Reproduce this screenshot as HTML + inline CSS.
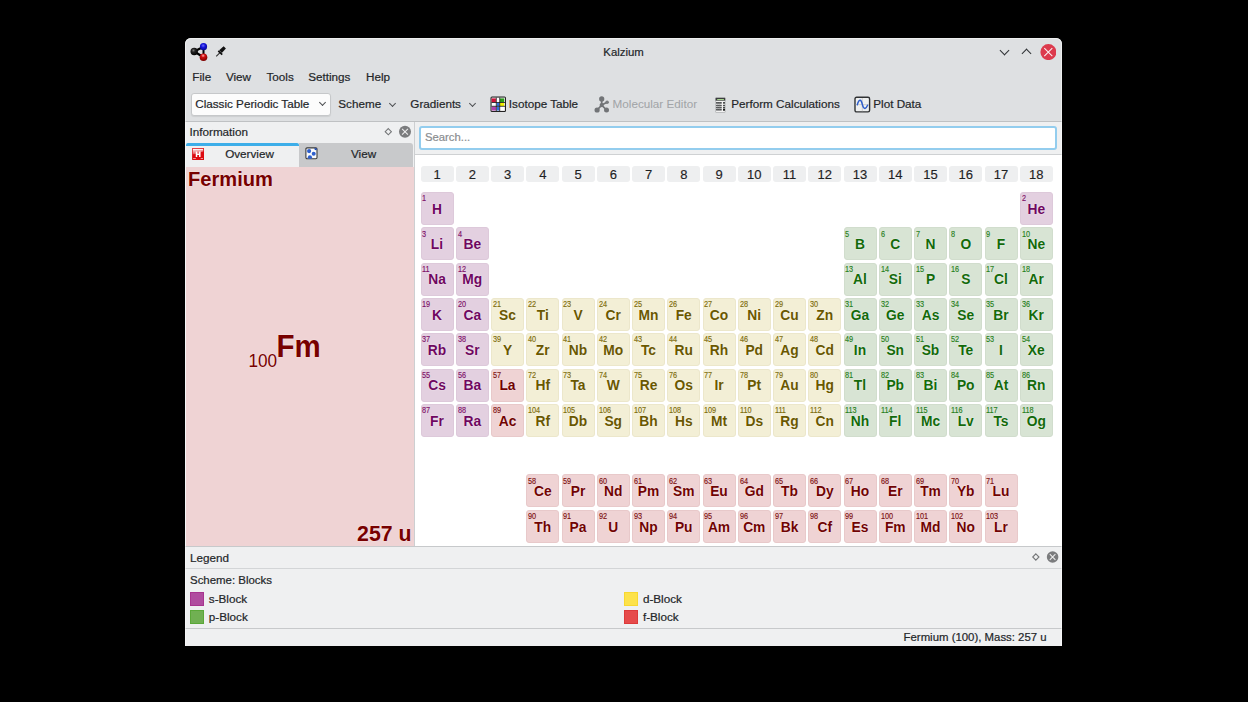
<!DOCTYPE html>
<html><head><meta charset="utf-8">
<style>
*{margin:0;padding:0;box-sizing:border-box}
html,body{width:1248px;height:702px;background:#000;overflow:hidden;font-family:"Liberation Sans",sans-serif;color:#232629}
.a{position:absolute}
.t{position:absolute;white-space:nowrap;line-height:1}
#win{position:absolute;left:185px;top:38px;width:877px;height:608px;background:#eff0f1;border-radius:6px 6px 0 0;overflow:hidden}
#hdr{position:absolute;left:0;top:0;width:877px;height:84px;background:#dee0e2;border-bottom:1px solid #bfc1c3}
.ui{font-size:11.7px;-webkit-text-stroke:0.2px currentColor}
.combo{position:absolute;left:5.8px;top:55.3px;width:140.3px;height:22.3px;background:#fcfcfc;border:1px solid #c6c8ca;border-radius:3px;box-shadow:0 1px 1px rgba(0,0,0,.08)}
.chev{position:absolute;width:6px;height:6px;border-right:1.1px solid #4d4f52;border-bottom:1.1px solid #4d4f52;transform:rotate(45deg)}
#info{position:absolute;left:1px;top:84px;width:228px;height:424px}
#pink{position:absolute;left:1px;top:128.6px;width:228px;height:379.4px;background:#efd3d4}
.red{color:#780000;text-shadow:0 0 2px rgba(255,255,255,.6)}
#content{position:absolute;left:230px;top:116px;width:647px;height:392px;background:#fff}
.c{position:absolute;width:33.2px;height:33px;border-radius:3px}
.c i{position:absolute;left:0.8px;top:1.3px;font-style:normal;font-size:8.3px;line-height:1;letter-spacing:-0.1px;transform:scaleX(.88);transform-origin:0 0;-webkit-text-stroke:0.15px currentColor}
.c b{position:absolute;left:-1px;width:33px;top:9.9px;text-align:center;font-size:13.8px;line-height:1;font-weight:bold;text-shadow:0 0 1.5px rgba(255,255,255,.9)}
.s{background:#e3d0e0;border:1px solid #ddc9da}
.s i{color:#7e1068}.s b{color:#6f0760}
.p{background:#d8e4d4;border:1px solid #d1ddcd}
.p i{color:#27801c}.p b{color:#136a0a}
.d{background:#f3efd6;border:1px solid #ece7cb}
.d i{color:#7e6d0c}.d b{color:#6a5800}
.f{background:#efd3d4;border:1px solid #e8c9ca}
.f i{color:#7e1212}.f b{color:#710303}
.g{position:absolute;top:166px;width:33.2px;height:16px;background:#eeeff0;border-radius:3px;text-align:center;font-size:13px;line-height:17.6px;color:#1f2224;-webkit-text-stroke:0.15px #1f2224}
.sw{position:absolute;width:14.2px;height:14px;border:1px solid rgba(0,0,0,.1)}
</style></head><body>
<div id="win">
  <div id="hdr">
    <!-- app icon -->
    <svg class="a" style="left:0;top:0" width="60" height="30" viewBox="0 0 60 30">
      <defs>
        <radialGradient id="gk" cx="0.4" cy="0.35" r="0.7"><stop offset="0" stop-color="#777"/><stop offset="0.35" stop-color="#222"/><stop offset="1" stop-color="#000"/></radialGradient>
        <radialGradient id="gb" cx="0.45" cy="0.35" r="0.7"><stop offset="0" stop-color="#6a6aff"/><stop offset="0.4" stop-color="#1414d8"/><stop offset="1" stop-color="#05058a"/></radialGradient>
        <radialGradient id="gr" cx="0.45" cy="0.3" r="0.7"><stop offset="0" stop-color="#ffb0b0"/><stop offset="0.35" stop-color="#d01010"/><stop offset="1" stop-color="#7a0000"/></radialGradient>
      </defs>
      <line x1="9.2" y1="13.5" x2="18.5" y2="8.7" stroke="#000" stroke-width="2.2"/>
      <line x1="9.2" y1="13.5" x2="18.5" y2="19.2" stroke="#000" stroke-width="2.2"/>
      <line x1="18.5" y1="8.7" x2="18.5" y2="19.2" stroke="#000" stroke-width="2"/>
      <circle cx="9.2" cy="13.5" r="3.7" fill="url(#gk)"/>
      <circle cx="18.5" cy="8.7" r="3.6" fill="url(#gb)"/>
      <circle cx="18.5" cy="19.2" r="3.8" fill="url(#gr)"/>
      <path d="M31.2 18.4 L35.3 14.3" stroke="#333" stroke-width="1.1"/>
      <path d="M34.2 12.3 L38.6 8.2 L40.9 10.6 L36.8 15 Z" fill="#111"/>
      <path d="M33.3 12.8 L37.2 16.7" stroke="#111" stroke-width="1.7"/>
    </svg>
    <div class="t ui" style="left:418.3px;top:9px;font-size:11.4px">Kalzium</div>
    <!-- window controls -->
    <div class="chev" style="left:815.5px;top:9.2px;width:7px;height:7px;border-color:#2e3134"></div>
    <div class="chev" style="left:837.9px;top:12.1px;width:7px;height:7px;border-color:#2e3134;transform:rotate(225deg)"></div>
    <svg class="a" style="left:855px;top:6px" width="16" height="16" viewBox="0 0 16 16">
      <circle cx="8.4" cy="8.1" r="8" fill="#dc3a4d"/>
      <path d="M4.3 4.1 L12.3 12.1 M12.3 4.1 L4.3 12.1" stroke="#fff" stroke-width="1.05" opacity=".92"/>
    </svg>
    <!-- menu -->
    <div class="t ui" style="left:7.3px;top:32.8px">File</div>
    <div class="t ui" style="left:40.9px;top:32.8px">View</div>
    <div class="t ui" style="left:81.5px;top:32.8px">Tools</div>
    <div class="t ui" style="left:123.2px;top:32.8px">Settings</div>
    <div class="t ui" style="left:181px;top:32.8px">Help</div>
    <!-- toolbar -->
    <div class="combo"></div>
    <div class="t ui" style="left:10.2px;top:60.1px">Classic Periodic Table</div>
    <div class="chev" style="left:134.5px;top:61.5px;width:5px;height:5px"></div>
    <div class="t ui" style="left:153.3px;top:60.3px">Scheme</div>
    <div class="chev" style="left:205.2px;top:62.5px;width:5px;height:5px"></div>
    <div class="t ui" style="left:225.3px;top:60.3px">Gradients</div>
    <div class="chev" style="left:284.8px;top:62.5px;width:5px;height:5px"></div>
    <!-- isotope icon -->
    <svg class="a" style="left:305px;top:58.4px" width="17" height="17" viewBox="0 0 17 17">
      <rect x="0.5" y="0.5" width="15.5" height="15.5" rx="1.5" fill="#222"/>
      <rect x="1.6" y="1.6" width="13.3" height="13.3" fill="#fff"/>
      <rect x="1.7" y="2.4" width="4.2" height="3.9" fill="#d0103a"/>
      <rect x="10" y="2.4" width="4.2" height="3.9" fill="#2a9a1a"/>
      <rect x="6.8" y="6.8" width="2.6" height="3.2" fill="#2f6fe0"/>
      <rect x="10" y="6.8" width="4.2" height="3.2" fill="#f2f000"/>
      <rect x="1.7" y="10.6" width="4.2" height="3.9" fill="#b040b0"/>
      <rect x="6.8" y="10.6" width="2.6" height="3.9" fill="#2f6fe0"/>
      <path d="M1.6 6.5 H15 M1.6 10.3 H15 M6.3 1.6 V15 M9.7 1.6 V15" stroke="#111" stroke-width="0.8"/>
    </svg>
    <div class="t ui" style="left:323.8px;top:60.3px">Isotope Table</div>
    <!-- molecular editor icon -->
    <svg class="a" style="left:409px;top:58px" width="17" height="17" viewBox="0 0 17 17">
      <path d="M7.7 3 L7.7 9.1 M7.7 9.1 L3.1 14 M7.7 9.1 L12.5 14 M7.7 9.1 L13.1 6.3" stroke="#727477" stroke-width="1.7" fill="none"/>
      <circle cx="7.7" cy="2.9" r="2.6" fill="#727477"/>
      <circle cx="13.1" cy="6.3" r="1.8" fill="#7a7c7f"/>
      <circle cx="7.7" cy="9.1" r="2.1" fill="#727477"/>
      <circle cx="3.1" cy="14" r="2.6" fill="#727477"/>
      <circle cx="12.5" cy="14" r="2.5" fill="#727477"/>
    </svg>
    <div class="t ui" style="left:427.6px;top:60.3px;color:#a2a5a8;-webkit-text-stroke:0.05px #a2a5a8">Molecular Editor</div>
    <!-- calculator icon -->
    <svg class="a" style="left:530px;top:59px" width="12" height="17" viewBox="0 0 12 17">
      <rect x="0.6" y="0.8" width="9.6" height="14.7" rx="0.6" fill="#f2f2f2" stroke="#a0a2a4" stroke-width="0.6"/>
      <rect x="0.6" y="0.8" width="9.6" height="2.9" fill="#3c3e40"/>
      <rect x="2.2" y="2" width="6.7" height="1.1" fill="#a6d48e"/>
      <g fill="#4a4c4e">
        <rect x="1.1" y="5" width="5.6" height="1.7"/><rect x="8" y="5" width="2" height="1.7"/>
        <rect x="1.1" y="7.8" width="5.6" height="1.4"/><rect x="8" y="7.8" width="2" height="1.4"/>
        <rect x="1.1" y="9.9" width="5.6" height="1.5"/><rect x="8" y="9.9" width="2" height="1.5"/>
        <rect x="1.1" y="12" width="5.6" height="1.5"/><rect x="8" y="11.8" width="2" height="1.9" fill="#1a1a1a"/>
      </g>
      <path d="M2.9 5 V13.5 M4.8 5 V13.5" stroke="#8a8c8e" stroke-width="0.5"/>
    </svg>
    <div class="t ui" style="left:546.3px;top:60.3px">Perform Calculations</div>
    <!-- plot icon -->
    <svg class="a" style="left:669px;top:58px" width="17" height="18" viewBox="0 0 17 18">
      <rect x="1" y="1.3" width="14.6" height="14.6" rx="1.6" fill="#eef0f0" stroke="#303234" stroke-width="1.4"/>
      <path d="M8.3 2 V15.3 M1.7 8.6 H15" stroke="#b8babc" stroke-width="0.6"/>
      <path d="M3.3 8.8 C4.2 5.5 5.2 4.2 6.2 4.3 C7.4 4.4 7.9 6.5 8.4 8.6 C9 11 9.8 12.5 11 12.4 C12.2 12.3 12.9 10.8 13.6 9.2" stroke="#2f5fcc" stroke-width="1.5" fill="none" stroke-linecap="round"/>
    </svg>
    <div class="t ui" style="left:688.3px;top:60.3px">Plot Data</div>
  </div>

  <!-- info dock -->
  <div class="t ui" style="left:4.5px;top:88px">Information</div>
  <svg class="a" style="left:196px;top:87px" width="34" height="14" viewBox="0 0 34 14">
    <path d="M7.3 3.6 L10.4 6.7 L7.3 9.8 L4.2 6.7 Z" fill="none" stroke="#76787a" stroke-width="1.1"/>
    <circle cx="24" cy="6.7" r="6" fill="#7b7c7e"/>
    <path d="M21.1 3.8 L26.9 9.6 M26.9 3.8 L21.1 9.6" stroke="#eeeeee" stroke-width="1.05"/>
  </svg>
  <div class="a" style="left:114px;top:105px;width:114px;height:23.6px;background:#c8c9cb;border-radius:0 3px 0 0"></div>
  <div class="a" style="left:1px;top:105.2px;width:113px;height:2.5px;background:#3daee9;border-radius:2px 2px 0 0"></div>
  <svg class="a" style="left:7px;top:110px" width="13" height="13" viewBox="0 0 13 13">
    <defs><linearGradient id="gl" x1="0" y1="0" x2="0.3" y2="1"><stop offset="0" stop-color="#fff" stop-opacity=".95"/><stop offset="1" stop-color="#fff" stop-opacity=".25"/></linearGradient></defs>
    <rect x="0.1" y="0" width="11.9" height="12.1" rx="0.5" fill="#dc0a10"/>
    <path d="M0.8 0.8 H11.3 V3.5 C8.5 3.8 5 6.5 0.8 6.3 Z" fill="url(#gl)"/>
    <path d="M4.5 3.6 V9 M7.8 3.6 V9 M4.5 6.3 H7.8" stroke="#fff" stroke-width="1.5"/>
    <path d="M1 1.5 H11" stroke="#fff" stroke-width="0.9" opacity=".8"/>
    <path d="M1.1 10.5 H3.9 M8.7 10.5 H11" stroke="#fff" stroke-width="0.8" opacity=".7"/>
  </svg>
  <div class="t ui" style="left:40.5px;top:148px"></div>
  <div class="t ui" style="left:40.2px;top:109.9px">Overview</div>
  <svg class="a" style="left:120px;top:109px" width="14" height="14" viewBox="0 0 14 14">
    <defs><clipPath id="cv"><rect x="1.3" y="1.3" width="10.4" height="10.4"/></clipPath></defs>
    <rect x="0.9" y="0.9" width="11.1" height="10.9" rx="1.2" fill="#fbfbfb" stroke="#3a3b3c" stroke-width="1.1"/>
    <g clip-path="url(#cv)" fill="#2f5fcc">
      <circle cx="4.1" cy="4.1" r="2.1"/><circle cx="8.7" cy="6.8" r="2"/><circle cx="4.9" cy="10.3" r="2.1"/><circle cx="11" cy="1.6" r="1.7" fill="#1c48b0"/>
    </g>
  </svg>
  <div class="t ui" style="left:166px;top:109.9px">View</div>
  <div id="pink"></div>
  <div class="t red" style="left:3px;top:131px;font-size:20.1px;font-weight:bold">Fermium</div>
  <div class="t red" style="left:63.5px;top:314.7px;font-size:17.2px;transform:scaleY(1.05);transform-origin:0 85%">100</div>
  <div class="t red" style="left:91.5px;top:293.8px;font-size:29.5px;font-weight:bold;transform:scaleY(1.07);transform-origin:0 85%">Fm</div>
  <div class="t red" style="left:172.1px;top:485.9px;font-size:21.3px;font-weight:bold">257 u</div>
  <div class="a" style="left:229px;top:84px;width:1px;height:424px;background:#cdcfd1"></div>

  <!-- content -->
  <div class="a" style="left:234.3px;top:88px;width:637.8px;height:24px;border:2px solid #93cdee;border-radius:3px;background:#fff"></div>
  <div class="t ui" style="left:240px;top:94.3px;color:#8a8d90;font-size:11.3px">Search...</div>
  <div id="content"></div>
  <div class="a" style="left:230px;top:116px;width:647px;height:1px;background:#cfd1d3"></div>

  <!-- legend -->
  <div class="a" style="left:0;top:508px;width:877px;height:1px;background:#c7c9cb"></div>
  <div class="t ui" style="left:5px;top:513.8px">Legend</div>
  <svg class="a" style="left:842px;top:510px" width="34" height="18" viewBox="0 0 34 18">
    <path d="M8.85 5.9 L11.95 9 L8.85 12.1 L5.75 9 Z" fill="none" stroke="#76787a" stroke-width="1.1"/>
    <circle cx="25.6" cy="9" r="5.8" fill="#7b7c7e"/>
    <path d="M22.8 6.2 L28.4 11.8 M28.4 6.2 L22.8 11.8" stroke="#eeeeee" stroke-width="1.05"/>
  </svg>
  <div class="a" style="left:0;top:530px;width:877px;height:1px;background:#d3d5d7"></div>
  <div class="t ui" style="left:5px;top:536.5px;font-size:11.45px">Scheme: Blocks</div>
  <div class="sw" style="left:5px;top:553.5px;background:#b04c9f;border-color:#a8348f"></div>
  <div class="t ui" style="left:23.8px;top:554.5px">s-Block</div>
  <div class="sw" style="left:5px;top:572px;background:#70b052;border-color:#5aa838"></div>
  <div class="t ui" style="left:23.8px;top:572.8px">p-Block</div>
  <div class="sw" style="left:438.7px;top:553.5px;background:#fde24a;border-color:#f8d830"></div>
  <div class="t ui" style="left:457.9px;top:554.5px">d-Block</div>
  <div class="sw" style="left:438.7px;top:572px;background:#e64b4b;border-color:#dc3a3a"></div>
  <div class="t ui" style="left:457.9px;top:572.8px">f-Block</div>
  <div class="a" style="left:0;top:590px;width:877px;height:1px;background:#c7c9cb"></div>
  <div class="t ui" style="right:15.4px;top:593.5px;font-size:11.4px">Fermium (100), Mass: 257 u</div>
<div class="a" style="left:0;top:0;width:877px;height:608px;border:1px solid rgba(255,255,255,.45);border-bottom:none;border-radius:6px 6px 0 0;z-index:5"></div>
</div>
<div id="tbl" class="a" style="left:0;top:0">
<div class="g" style="left:420.50px">1</div>
<div class="g" style="left:455.75px">2</div>
<div class="g" style="left:491.00px">3</div>
<div class="g" style="left:526.25px">4</div>
<div class="g" style="left:561.50px">5</div>
<div class="g" style="left:596.75px">6</div>
<div class="g" style="left:632.00px">7</div>
<div class="g" style="left:667.25px">8</div>
<div class="g" style="left:702.50px">9</div>
<div class="g" style="left:737.75px">10</div>
<div class="g" style="left:773.00px">11</div>
<div class="g" style="left:808.25px">12</div>
<div class="g" style="left:843.50px">13</div>
<div class="g" style="left:878.75px">14</div>
<div class="g" style="left:914.00px">15</div>
<div class="g" style="left:949.25px">16</div>
<div class="g" style="left:984.50px">17</div>
<div class="g" style="left:1019.75px">18</div>
<div class="c s" style="left:420.50px;top:192.00px"><i>1</i><b>H</b></div>
<div class="c s" style="left:1019.75px;top:192.00px"><i>2</i><b>He</b></div>
<div class="c s" style="left:420.50px;top:227.30px"><i>3</i><b>Li</b></div>
<div class="c s" style="left:455.75px;top:227.30px"><i>4</i><b>Be</b></div>
<div class="c p" style="left:843.50px;top:227.30px"><i>5</i><b>B</b></div>
<div class="c p" style="left:878.75px;top:227.30px"><i>6</i><b>C</b></div>
<div class="c p" style="left:914.00px;top:227.30px"><i>7</i><b>N</b></div>
<div class="c p" style="left:949.25px;top:227.30px"><i>8</i><b>O</b></div>
<div class="c p" style="left:984.50px;top:227.30px"><i>9</i><b>F</b></div>
<div class="c p" style="left:1019.75px;top:227.30px"><i>10</i><b>Ne</b></div>
<div class="c s" style="left:420.50px;top:262.60px"><i>11</i><b>Na</b></div>
<div class="c s" style="left:455.75px;top:262.60px"><i>12</i><b>Mg</b></div>
<div class="c p" style="left:843.50px;top:262.60px"><i>13</i><b>Al</b></div>
<div class="c p" style="left:878.75px;top:262.60px"><i>14</i><b>Si</b></div>
<div class="c p" style="left:914.00px;top:262.60px"><i>15</i><b>P</b></div>
<div class="c p" style="left:949.25px;top:262.60px"><i>16</i><b>S</b></div>
<div class="c p" style="left:984.50px;top:262.60px"><i>17</i><b>Cl</b></div>
<div class="c p" style="left:1019.75px;top:262.60px"><i>18</i><b>Ar</b></div>
<div class="c s" style="left:420.50px;top:297.90px"><i>19</i><b>K</b></div>
<div class="c s" style="left:455.75px;top:297.90px"><i>20</i><b>Ca</b></div>
<div class="c d" style="left:491.00px;top:297.90px"><i>21</i><b>Sc</b></div>
<div class="c d" style="left:526.25px;top:297.90px"><i>22</i><b>Ti</b></div>
<div class="c d" style="left:561.50px;top:297.90px"><i>23</i><b>V</b></div>
<div class="c d" style="left:596.75px;top:297.90px"><i>24</i><b>Cr</b></div>
<div class="c d" style="left:632.00px;top:297.90px"><i>25</i><b>Mn</b></div>
<div class="c d" style="left:667.25px;top:297.90px"><i>26</i><b>Fe</b></div>
<div class="c d" style="left:702.50px;top:297.90px"><i>27</i><b>Co</b></div>
<div class="c d" style="left:737.75px;top:297.90px"><i>28</i><b>Ni</b></div>
<div class="c d" style="left:773.00px;top:297.90px"><i>29</i><b>Cu</b></div>
<div class="c d" style="left:808.25px;top:297.90px"><i>30</i><b>Zn</b></div>
<div class="c p" style="left:843.50px;top:297.90px"><i>31</i><b>Ga</b></div>
<div class="c p" style="left:878.75px;top:297.90px"><i>32</i><b>Ge</b></div>
<div class="c p" style="left:914.00px;top:297.90px"><i>33</i><b>As</b></div>
<div class="c p" style="left:949.25px;top:297.90px"><i>34</i><b>Se</b></div>
<div class="c p" style="left:984.50px;top:297.90px"><i>35</i><b>Br</b></div>
<div class="c p" style="left:1019.75px;top:297.90px"><i>36</i><b>Kr</b></div>
<div class="c s" style="left:420.50px;top:333.20px"><i>37</i><b>Rb</b></div>
<div class="c s" style="left:455.75px;top:333.20px"><i>38</i><b>Sr</b></div>
<div class="c d" style="left:491.00px;top:333.20px"><i>39</i><b>Y</b></div>
<div class="c d" style="left:526.25px;top:333.20px"><i>40</i><b>Zr</b></div>
<div class="c d" style="left:561.50px;top:333.20px"><i>41</i><b>Nb</b></div>
<div class="c d" style="left:596.75px;top:333.20px"><i>42</i><b>Mo</b></div>
<div class="c d" style="left:632.00px;top:333.20px"><i>43</i><b>Tc</b></div>
<div class="c d" style="left:667.25px;top:333.20px"><i>44</i><b>Ru</b></div>
<div class="c d" style="left:702.50px;top:333.20px"><i>45</i><b>Rh</b></div>
<div class="c d" style="left:737.75px;top:333.20px"><i>46</i><b>Pd</b></div>
<div class="c d" style="left:773.00px;top:333.20px"><i>47</i><b>Ag</b></div>
<div class="c d" style="left:808.25px;top:333.20px"><i>48</i><b>Cd</b></div>
<div class="c p" style="left:843.50px;top:333.20px"><i>49</i><b>In</b></div>
<div class="c p" style="left:878.75px;top:333.20px"><i>50</i><b>Sn</b></div>
<div class="c p" style="left:914.00px;top:333.20px"><i>51</i><b>Sb</b></div>
<div class="c p" style="left:949.25px;top:333.20px"><i>52</i><b>Te</b></div>
<div class="c p" style="left:984.50px;top:333.20px"><i>53</i><b>I</b></div>
<div class="c p" style="left:1019.75px;top:333.20px"><i>54</i><b>Xe</b></div>
<div class="c s" style="left:420.50px;top:368.50px"><i>55</i><b>Cs</b></div>
<div class="c s" style="left:455.75px;top:368.50px"><i>56</i><b>Ba</b></div>
<div class="c f" style="left:491.00px;top:368.50px"><i>57</i><b>La</b></div>
<div class="c f" style="left:526.25px;top:474.40px"><i>58</i><b>Ce</b></div>
<div class="c f" style="left:561.50px;top:474.40px"><i>59</i><b>Pr</b></div>
<div class="c f" style="left:596.75px;top:474.40px"><i>60</i><b>Nd</b></div>
<div class="c f" style="left:632.00px;top:474.40px"><i>61</i><b>Pm</b></div>
<div class="c f" style="left:667.25px;top:474.40px"><i>62</i><b>Sm</b></div>
<div class="c f" style="left:702.50px;top:474.40px"><i>63</i><b>Eu</b></div>
<div class="c f" style="left:737.75px;top:474.40px"><i>64</i><b>Gd</b></div>
<div class="c f" style="left:773.00px;top:474.40px"><i>65</i><b>Tb</b></div>
<div class="c f" style="left:808.25px;top:474.40px"><i>66</i><b>Dy</b></div>
<div class="c f" style="left:843.50px;top:474.40px"><i>67</i><b>Ho</b></div>
<div class="c f" style="left:878.75px;top:474.40px"><i>68</i><b>Er</b></div>
<div class="c f" style="left:914.00px;top:474.40px"><i>69</i><b>Tm</b></div>
<div class="c f" style="left:949.25px;top:474.40px"><i>70</i><b>Yb</b></div>
<div class="c f" style="left:984.50px;top:474.40px"><i>71</i><b>Lu</b></div>
<div class="c d" style="left:526.25px;top:368.50px"><i>72</i><b>Hf</b></div>
<div class="c d" style="left:561.50px;top:368.50px"><i>73</i><b>Ta</b></div>
<div class="c d" style="left:596.75px;top:368.50px"><i>74</i><b>W</b></div>
<div class="c d" style="left:632.00px;top:368.50px"><i>75</i><b>Re</b></div>
<div class="c d" style="left:667.25px;top:368.50px"><i>76</i><b>Os</b></div>
<div class="c d" style="left:702.50px;top:368.50px"><i>77</i><b>Ir</b></div>
<div class="c d" style="left:737.75px;top:368.50px"><i>78</i><b>Pt</b></div>
<div class="c d" style="left:773.00px;top:368.50px"><i>79</i><b>Au</b></div>
<div class="c d" style="left:808.25px;top:368.50px"><i>80</i><b>Hg</b></div>
<div class="c p" style="left:843.50px;top:368.50px"><i>81</i><b>Tl</b></div>
<div class="c p" style="left:878.75px;top:368.50px"><i>82</i><b>Pb</b></div>
<div class="c p" style="left:914.00px;top:368.50px"><i>83</i><b>Bi</b></div>
<div class="c p" style="left:949.25px;top:368.50px"><i>84</i><b>Po</b></div>
<div class="c p" style="left:984.50px;top:368.50px"><i>85</i><b>At</b></div>
<div class="c p" style="left:1019.75px;top:368.50px"><i>86</i><b>Rn</b></div>
<div class="c s" style="left:420.50px;top:403.80px"><i>87</i><b>Fr</b></div>
<div class="c s" style="left:455.75px;top:403.80px"><i>88</i><b>Ra</b></div>
<div class="c f" style="left:491.00px;top:403.80px"><i>89</i><b>Ac</b></div>
<div class="c f" style="left:526.25px;top:509.70px"><i>90</i><b>Th</b></div>
<div class="c f" style="left:561.50px;top:509.70px"><i>91</i><b>Pa</b></div>
<div class="c f" style="left:596.75px;top:509.70px"><i>92</i><b>U</b></div>
<div class="c f" style="left:632.00px;top:509.70px"><i>93</i><b>Np</b></div>
<div class="c f" style="left:667.25px;top:509.70px"><i>94</i><b>Pu</b></div>
<div class="c f" style="left:702.50px;top:509.70px"><i>95</i><b>Am</b></div>
<div class="c f" style="left:737.75px;top:509.70px"><i>96</i><b>Cm</b></div>
<div class="c f" style="left:773.00px;top:509.70px"><i>97</i><b>Bk</b></div>
<div class="c f" style="left:808.25px;top:509.70px"><i>98</i><b>Cf</b></div>
<div class="c f" style="left:843.50px;top:509.70px"><i>99</i><b>Es</b></div>
<div class="c f" style="left:878.75px;top:509.70px"><i>100</i><b>Fm</b></div>
<div class="c f" style="left:914.00px;top:509.70px"><i>101</i><b>Md</b></div>
<div class="c f" style="left:949.25px;top:509.70px"><i>102</i><b>No</b></div>
<div class="c f" style="left:984.50px;top:509.70px"><i>103</i><b>Lr</b></div>
<div class="c d" style="left:526.25px;top:403.80px"><i>104</i><b>Rf</b></div>
<div class="c d" style="left:561.50px;top:403.80px"><i>105</i><b>Db</b></div>
<div class="c d" style="left:596.75px;top:403.80px"><i>106</i><b>Sg</b></div>
<div class="c d" style="left:632.00px;top:403.80px"><i>107</i><b>Bh</b></div>
<div class="c d" style="left:667.25px;top:403.80px"><i>108</i><b>Hs</b></div>
<div class="c d" style="left:702.50px;top:403.80px"><i>109</i><b>Mt</b></div>
<div class="c d" style="left:737.75px;top:403.80px"><i>110</i><b>Ds</b></div>
<div class="c d" style="left:773.00px;top:403.80px"><i>111</i><b>Rg</b></div>
<div class="c d" style="left:808.25px;top:403.80px"><i>112</i><b>Cn</b></div>
<div class="c p" style="left:843.50px;top:403.80px"><i>113</i><b>Nh</b></div>
<div class="c p" style="left:878.75px;top:403.80px"><i>114</i><b>Fl</b></div>
<div class="c p" style="left:914.00px;top:403.80px"><i>115</i><b>Mc</b></div>
<div class="c p" style="left:949.25px;top:403.80px"><i>116</i><b>Lv</b></div>
<div class="c p" style="left:984.50px;top:403.80px"><i>117</i><b>Ts</b></div>
<div class="c p" style="left:1019.75px;top:403.80px"><i>118</i><b>Og</b></div>
</div>
</body></html>
